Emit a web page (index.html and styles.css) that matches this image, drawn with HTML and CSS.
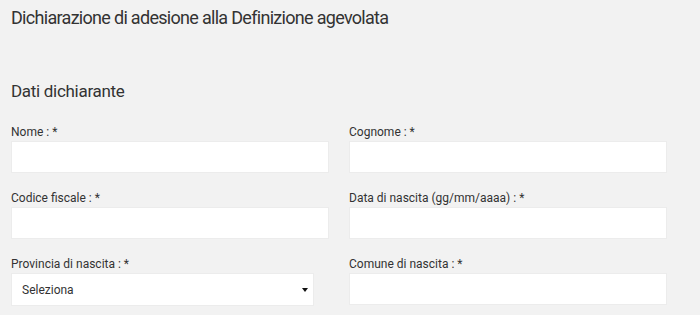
FILE: index.html
```html
<!DOCTYPE html>
<html lang="it">
  <head>
    <meta charset="UTF-8" />
    <meta name="viewport" content="width=device-width, initial-scale=1.0" />
    <title>Definizione agevolata</title>
    <link rel="stylesheet" href="styles.css">
  </head>
  <body>
    <h1 class="pageTitle">Dichiarazione di adesione alla Definizione agevolata</h1>
    <h2 class="sectionTitle">Dati dichiarante</h2>
    <form class="formGrid">
      <div class="field">
        <label for="nome">Nome : *</label>
        <input id="nome" type="text" />
      </div>
      <div class="field">
        <label for="cognome">Cognome : *</label>
        <input id="cognome" type="text" />
      </div>
      <div class="field">
        <label for="cf">Codice fiscale : *</label>
        <input id="cf" type="text" />
      </div>
      <div class="field">
        <label for="nascita">Data di nascita (gg/mm/aaaa) : *</label>
        <input id="nascita" type="text" />
      </div>
      <div class="field">
        <label for="provincia">Provincia di nascita : *</label>
        <div class="selectWrap">
          <select id="provincia">
            <option>Seleziona</option>
          </select>
        </div>
      </div>
      <div class="field">
        <label for="comune">Comune di nascita : *</label>
        <input id="comune" type="text" />
      </div>
    </form>
  </body>
</html>
```

FILE: styles.css
```css
body {
  font-family: Roboto, "Noto Sans", sans-serif;
  background-color: #f2f2f2;
  color: #333;
  margin: 0;
  padding: 0 11px;
}
.pageTitle {
  font-size: 18px;
  font-weight: normal;
  letter-spacing: -0.7px;
  line-height: 24px;
  margin: 6px 0 0;
}
.sectionTitle {
  font-size: 17px;
  font-weight: normal;
  letter-spacing: -0.3px;
  line-height: 22px;
  margin: 50px 0 0;
}
.formGrid {
  display: grid;
  grid-template-columns: 318px 318px;
  column-gap: 20px;
  row-gap: 16px;
  margin-top: 21px;
}
.field label {
  display: block;
  font-size: 12px;
  line-height: 18px;
}
.field input {
  display: block;
  box-sizing: border-box;
  width: 100%;
  height: 32px;
  margin: 0;
  border: 1px solid #ececec;
  background: white;
  font-family: inherit;
}
.selectWrap {
  position: relative;
  width: 303px;
}
.selectWrap select {
  display: block;
  box-sizing: border-box;
  width: 100%;
  height: 33px;
  padding: 0 10px;
  border: 1px solid #ececec;
  border-radius: 0;
  background: white;
  color: #333;
  font-family: inherit;
  font-size: 12px;
  appearance: none;
  -webkit-appearance: none;
}
.selectWrap::after {
  content: "";
  position: absolute;
  right: 6px;
  top: 15px;
  border-left: 3px solid transparent;
  border-right: 3px solid transparent;
  border-top: 4px solid #111;
}
```
